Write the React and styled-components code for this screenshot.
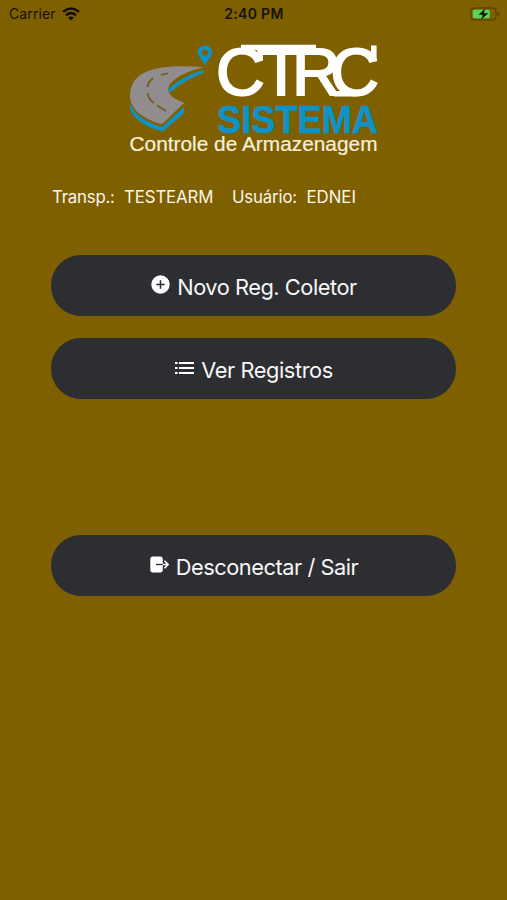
import React from "react";
import styled, { createGlobalStyle } from "styled-components";

const GlobalStyle = createGlobalStyle`
  * {
    box-sizing: border-box;
  }
  body {
    margin: 0;
    background-color: #7f6000;
    font-family: Inter, "Liberation Sans", sans-serif;
  }
`;

const Screen = styled.div`
  height: 900px;
  display: flex;
  flex-direction: column;
  background-color: #7f6000;
`;

const StatusBar = styled.header`
  height: 27px;
  padding: 0 7px 0 9px;
  display: grid;
  grid-template-columns: 1fr auto 1fr;
  align-items: center;
  color: #161103;
  font-size: 14px;
`;

const Carrier = styled.div`
  display: flex;
  align-items: center;
  gap: 6px;
  letter-spacing: 0.1px;
`;

const Clock = styled.div`
  margin-right: 1px;
  font-weight: 600;
  letter-spacing: 0.3px;
`;

const Power = styled.div`
  display: flex;
  justify-content: flex-end;
`;

const Logo = styled.svg`
  display: block;
  width: 260px;
  height: 120px;
  margin: 13px 0 0 124px;
  flex: none;
`;

const UserInfo = styled.div`
  display: flex;
  height: 24px;
  margin: 25px 0 0 52px;
  align-items: center;
  color: #fbf6ea;
  font-size: 16.8px;
  white-space: nowrap;
`;

const Info = styled.span`
  width: ${(props) => props.$width}px;
  letter-spacing: ${(props) => props.$spacing || 0}px;
`;

const Menu = styled.main`
  display: flex;
  flex-direction: column;
  margin: 46px 51px 0;
`;

const MenuButton = styled.button`
  height: 61px;
  margin: 0 0 ${(props) => props.$after || 0}px;
  padding: 3px 0 0 1px;
  display: flex;
  align-items: center;
  justify-content: center;
  gap: 7px;
  border: 0;
  border-radius: 30px;
  background-color: #2d2e32;
  color: #f7f7f7;
  font-family: inherit;
  font-size: 21.8px;
  letter-spacing: ${(props) => props.$spacing || 0}px;

  svg {
    margin-bottom: 5px;
    flex: none;
  }
`;

const WifiIcon = () => (
  <svg width="18" height="14" viewBox="0 0 18 14" fill="none" stroke="#120e02" strokeWidth="2.5">
    <path d="M1 4.9 Q9 -1.8 17 4.9" />
    <path d="M4 8.2 Q9 4 14 8.2" />
    <path d="M9 13.5 L6 10.6 Q9 8.3 12 10.6 Z" fill="#120e02" stroke="none" />
  </svg>
);

const BatteryIcon = () => (
  <svg width="30" height="14" viewBox="0 0 30 14">
    <rect x="1" y="1" width="25" height="12" rx="3.2" fill="none" stroke="#4b3900" />
    <rect x="2.8" y="2.8" width="17" height="8.4" rx="1.7" fill="#58d65c" />
    <path d="M27.5 4.8 Q31 7 27.5 9.2 Z" fill="#4b3900" />
    <path d="M15.2 1.6 L8.5 7.7 H12.8 L11 12.7 L18.3 6.3 H13.8 Z" fill="#0c1206" />
  </svg>
);

const PlusIcon = () => (
  <svg width="19" height="19" viewBox="0 0 19 19">
    <circle cx="9.5" cy="9.5" r="9.2" fill="#fff" />
    <path d="M9.5 5.3 V13.7 M5.3 9.5 H13.7" stroke="#2d2e32" strokeWidth="1.5" />
  </svg>
);

const ListIcon = () => (
  <svg width="19" height="14" viewBox="0 0 19 14" stroke="#fff" strokeWidth="2.1">
    <path d="M0 2 H2.6 M0 7 H2.6 M0 12 H2.6 M4 2 H19 M4 7 H19 M4 12 H19" />
  </svg>
);

const ExitIcon = () => (
  <svg width="19" height="17" viewBox="0 0 19 17" fill="none">
    <rect x="0.3" y="0.5" width="12.5" height="16" rx="2.7" fill="#fff" />
    <path d="M6 8.5 H12.8" stroke="#2d2e32" strokeWidth="1.3" />
    <path d="M12.8 8.5 H18 M14.5 4.8 L18.1 8.5 L14.5 12.2" stroke="#fff" strokeWidth="1.6" />
  </svg>
);

const CtrcLogo = () => (
  <Logo viewBox="124 40 260 120">
    {/* road with its blue edge */}
    <path
      d="M130 103.5 C134 114 146 123 162 127 L184 107 V113 L163 131.5 C145 127 133 119 130 108 Z"
      fill="#0e93c8"
    />
    <path d="M168 90 C175 82 187 75 203.5 70 V73 C190 78 180 84 169.5 93 Z" fill="#0e93c8" />
    <path
      d="M203.5 67.3 C179 65 151 66 139 76 C132 82 130 88 130 98 C132 111 144 119 162 124.3 L184 103 C178 100 170 97 168.2 91 C167 81 184 72 203.5 67.3 Z"
      fill="#918d8e"
    />
    <path
      d="M168 73.2 L161 75 M153 78 Q148 82 147.5 87 M147.5 93 Q149 100 154 103 M157 105.5 L166 111"
      fill="none"
      stroke="#705b20"
      strokeWidth="1.7"
    />
    {/* map pin */}
    <path
      d="M205 65.5 C203 60 197.8 57 197.8 52.6 A7.2 7.2 0 0 1 212.2 52.6 C212.2 57 207 60 205 65.5 Z"
      fill="#0e93c8"
    />
    <circle cx="205" cy="52.6" r="3.2" fill="#7f6000" />
    {/* name, with the bars that join the letters */}
    <text
      x="216 260.5 292 330.3"
      y="95.3"
      fill="#fff"
      stroke="#fff"
      strokeWidth="2"
      fontFamily="Liberation Sans, sans-serif"
      fontSize="67.5"
    >
      CTRC
    </text>
    <path
      d="M241 47.5 H316 M260.2 46 V60 M373.8 45.5 V61.5 M334 93.8 H356"
      stroke="#fff"
      strokeWidth="5.6"
      fill="none"
    />
    <text
      x="217"
      y="132.6"
      fill="#0e93c8"
      stroke="#0e93c8"
      strokeWidth="0.5"
      fontFamily="Liberation Sans, sans-serif"
      fontWeight="700"
      fontSize="38"
      textLength="161"
      lengthAdjust="spacingAndGlyphs"
    >
      SISTEMA
    </text>
    <text
      x="129.5"
      y="151"
      fill="#f7efd9"
      stroke="#f7efd9"
      strokeWidth="0.2"
      fontFamily="Liberation Sans, sans-serif"
      fontSize="20.5"
      textLength="248"
      lengthAdjust="spacingAndGlyphs"
    >
      Controle de Armazenagem
    </text>
  </Logo>
);

const App = () => {
  return (
    <Screen>
      <GlobalStyle />
      <StatusBar>
        <Carrier>
          Carrier
          <WifiIcon />
        </Carrier>
        <Clock>2:40 PM</Clock>
        <Power>
          <BatteryIcon />
        </Power>
      </StatusBar>
      <CtrcLogo />
      <UserInfo>
        <Info $width={72} $spacing={-0.2}>Transp.:</Info>
        <Info $width={108} $spacing={-0.1}>TESTEARM</Info>
        <Info $width={74.5} $spacing={-0.15}>Usuário:</Info>
        <Info $width={60}>EDNEI</Info>
      </UserInfo>
      <Menu>
        <MenuButton $after={22} $spacing={-0.46}>
          <PlusIcon />
          Novo Reg. Coletor
        </MenuButton>
        <MenuButton $after={136} $spacing={-0.42}>
          <ListIcon />
          Ver Registros
        </MenuButton>
        <MenuButton $spacing={-0.47}>
          <ExitIcon />
          Desconectar / Sair
        </MenuButton>
      </Menu>
    </Screen>
  );
};

export default App;
